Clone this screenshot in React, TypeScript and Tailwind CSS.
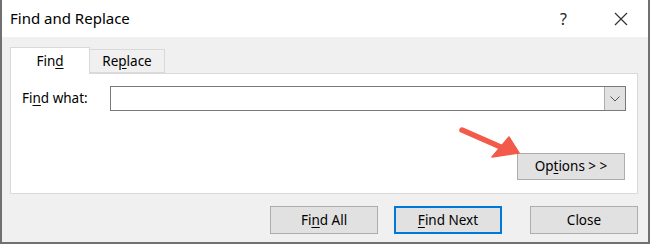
import React from 'react';

const U: React.FC<{ children: React.ReactNode }> = ({ children }) => (
  <span className="underline underline-offset-2 decoration-1">{children}</span>
);

interface DialogButtonProps {
  children: React.ReactNode;
  primary?: boolean;
  className?: string;
}

const DialogButton: React.FC<DialogButtonProps> = ({ children, primary = false, className = '' }) => (
  <button
    className={`h-[28px] w-[108px] bg-[#e1e1e1] text-[13.5px] text-black ${
      primary ? 'border-2 border-[#0078d7]' : 'border border-[#adadad]'
    } ${className}`}
  >
    {children}
  </button>
);

export default function App() {
  return (
    <div
      className="relative w-[650px] h-[244px] flex flex-col bg-[#f0f0f0] border-l-2 border-r-2 border-b-2 border-[#707070] overflow-hidden"
      style={{ fontFamily: '"Noto Sans", "Open Sans", sans-serif' }}
    >
      {/* title bar */}
      <div className="h-[37px] shrink-0 bg-white flex items-center pl-[8px]">
        <span className="text-[15px] text-black">Find and Replace</span>
        <span className="ml-auto mr-[47px] text-[16px] text-[#222]">?</span>
        <svg width="14" height="14" viewBox="0 0 14 14" className="mr-[20px]">
          <path d="M1 1 L13 13 M13 1 L1 13" stroke="#333" strokeWidth="1.2" />
        </svg>
      </div>

      {/* tabs */}
      <div className="pl-[8px] pt-[9px] flex items-end h-[36px]">
        <div className="relative z-10 h-[27px] w-[80px] bg-white border border-b-0 border-[#d9d9d9] flex items-center justify-center text-[13.5px] -mb-px">
          Fin<U>d</U>
        </div>
        <div className="h-[24px] w-[75px] border border-l-0 border-[#d9d9d9] flex items-center justify-center text-[13.5px]">
          Re<U>p</U>lace
        </div>
      </div>

      {/* panel */}
      <div className="ml-[8px] w-[628px] h-[121px] bg-white border border-[#d9d9d9] px-[11px] pt-[12px] flex flex-col">
        <div className="flex items-center">
          <span className="w-[88px] text-[13.5px]">
            Fi<U>n</U>d what:
          </span>
          <div className="flex-1 h-[25px] border border-[#7a7a7a] flex justify-end">
            <div className="w-[21px] h-full bg-[#e1e1e1] border-l border-[#adadad] flex items-center justify-center">
              <svg width="10" height="6" viewBox="0 0 10 6">
                <path d="M0.5 0.5 L5 5 L9.5 0.5" stroke="#555" strokeWidth="1" fill="none" />
              </svg>
            </div>
          </div>
        </div>
        <div className="flex justify-end mt-[42px] pr-px">
          <button className="h-[27px] w-[108px] bg-[#e1e1e1] border border-[#adadad] text-[13.5px]">
            Op<U>t</U>ions &gt; &gt;
          </button>
        </div>
      </div>

      {/* bottom buttons */}
      <div className="flex justify-end pr-[10px] mt-[12px]">
        <DialogButton>
          Fi<U>n</U>d All
        </DialogButton>
        <DialogButton primary className="ml-[16px]">
          <U>F</U>ind Next
        </DialogButton>
        <DialogButton className="ml-[28px]">Close</DialogButton>
      </div>

      {/* annotation arrow */}
      <svg
        width="70"
        height="36"
        viewBox="0 0 70 36"
        className="absolute left-[453px] top-[124px]"
      >
        <path d="M7 6 L48 24" stroke="#f25a4a" strokeWidth="5.5" strokeLinecap="round" />
        <path d="M64 29 L54 13 L37 33 Z" fill="#f25a4a" stroke="#f25a4a" strokeWidth="1.5" strokeLinejoin="round" />
      </svg>
    </div>
  );
}
